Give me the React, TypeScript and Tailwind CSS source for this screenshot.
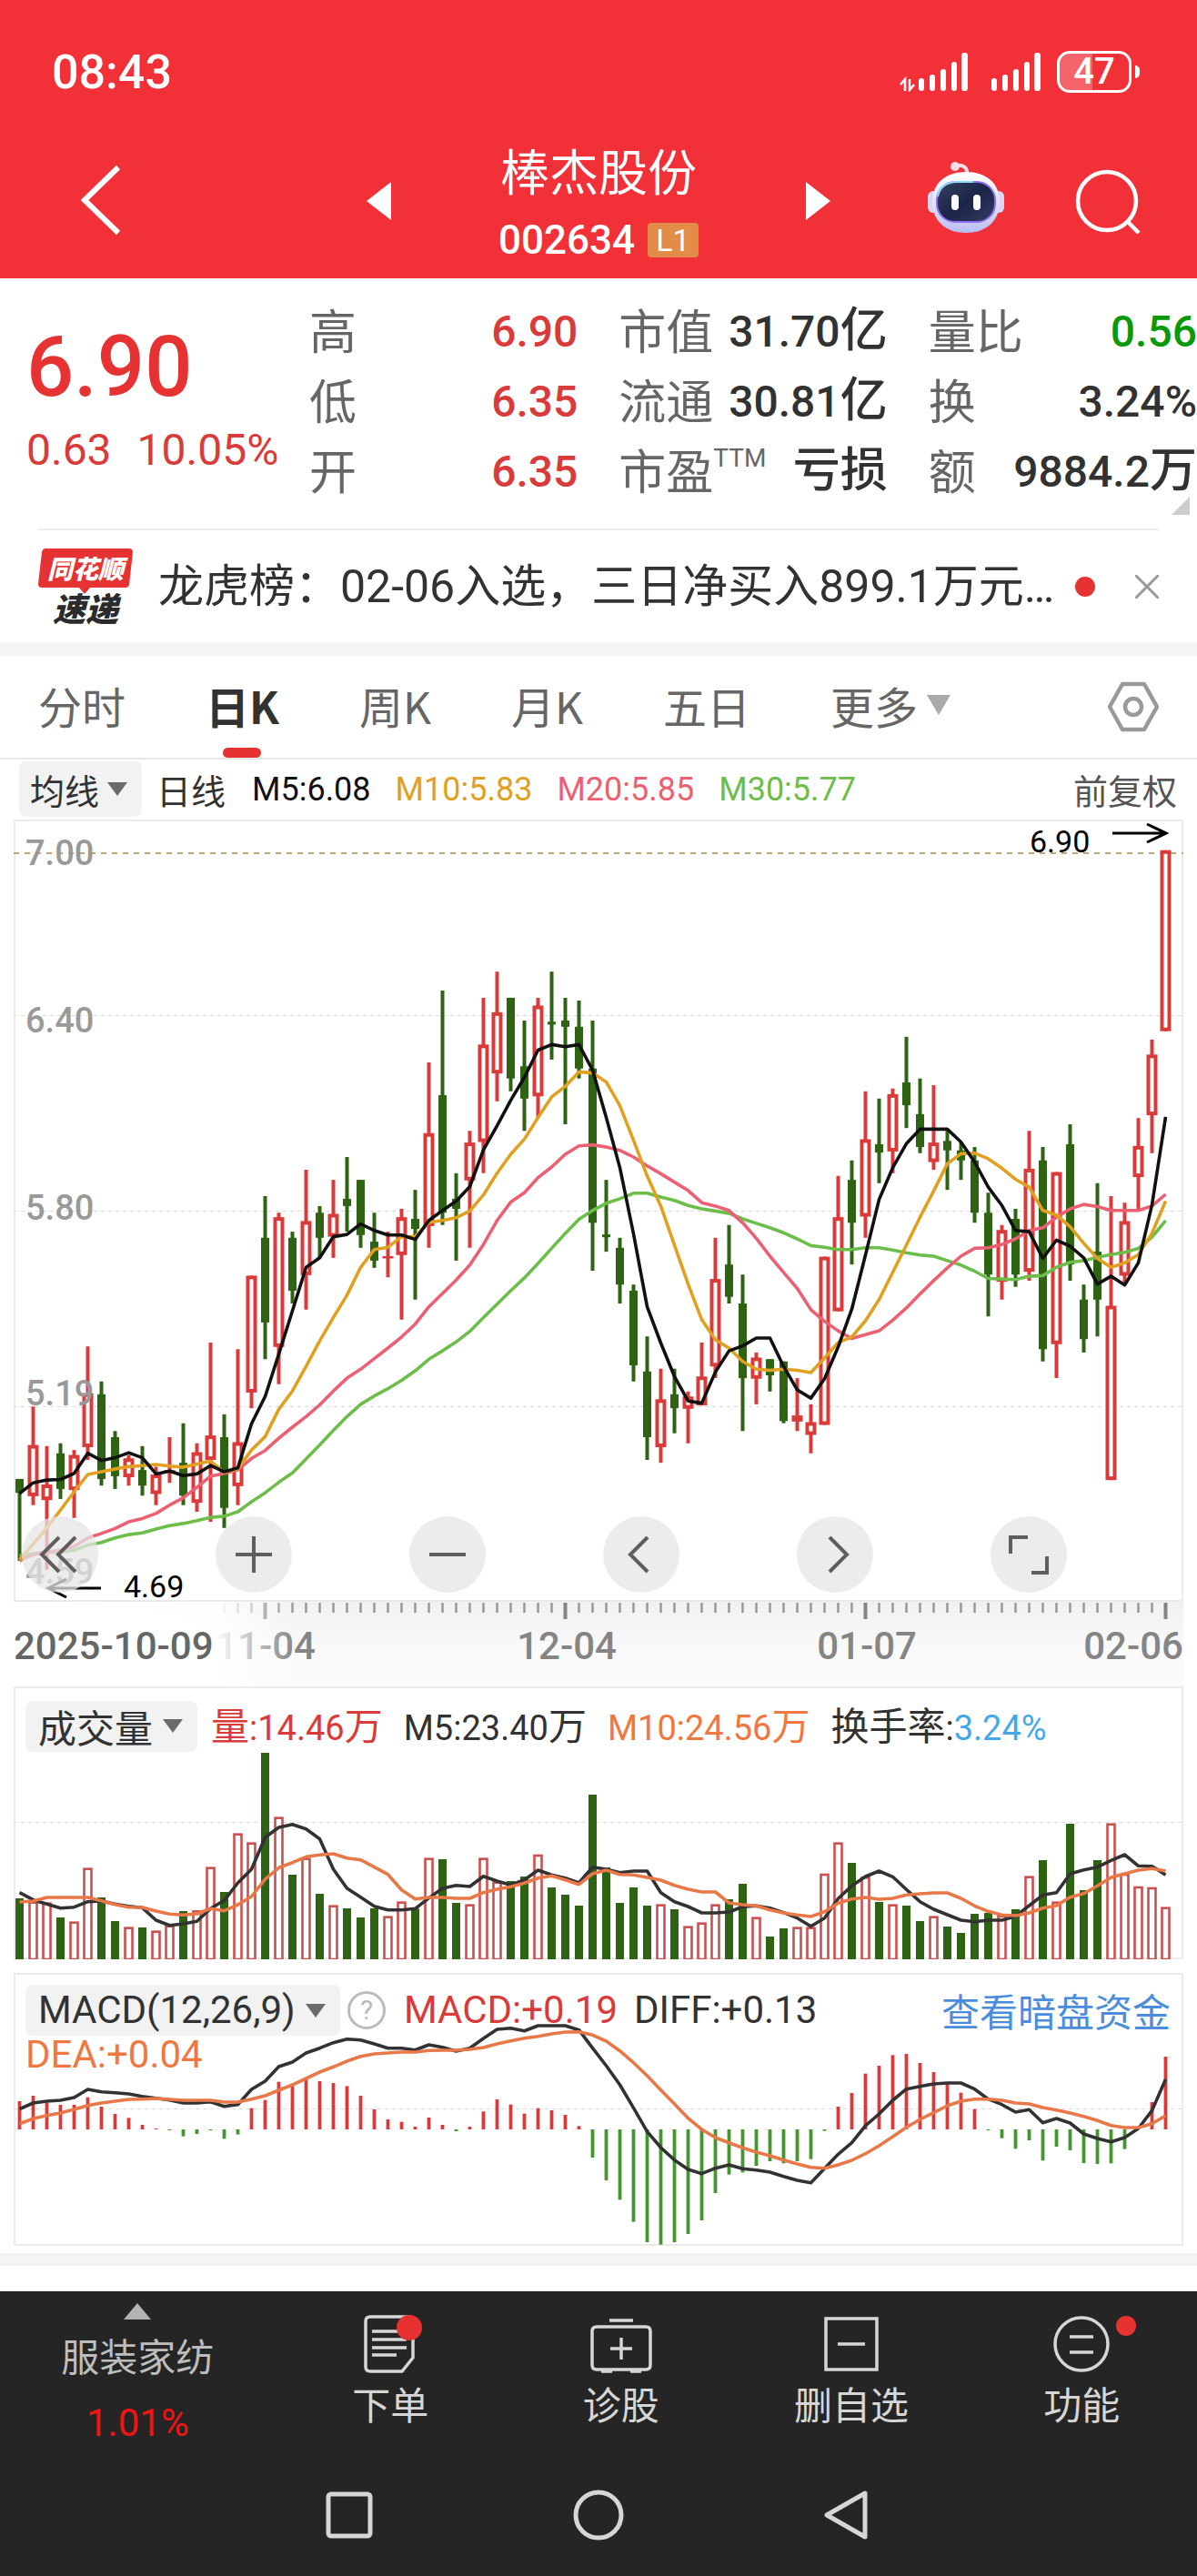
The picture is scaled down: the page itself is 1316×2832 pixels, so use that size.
import React, { useState } from 'react';

const NUMERALS = "Roboto, 'Noto Sans CJK SC', sans-serif";

const RED = '#d93a3a';
const GREEN = '#2f6314';

// One entry per trading day: high, body top, body bottom, low, 1 = rising.
// Levels are counted downwards from the top of the price panel.
const candles = [
  [1202, 1202, 1227, 1349, 0], [1072, 1141, 1233, 1249, 1], [1143, 1212, 1240, 1365, 1], [1138, 1156, 1220, 1238, 0],
  [1150, 1159, 1222, 1272, 1], [964, 1048, 1145, 1168, 1], [1027, 1050, 1202, 1214, 0], [1116, 1127, 1197, 1220, 0],
  [1159, 1165, 1199, 1214, 1], [1143, 1186, 1214, 1232, 0], [1180, 1194, 1229, 1249, 1], [1127, 1186, 1190, 1209, 1],
  [1102, 1173, 1232, 1249, 0], [1138, 1154, 1245, 1261, 1], [957, 1124, 1168, 1279, 1], [1086, 1127, 1254, 1290, 0],
  [969, 1136, 1215, 1249, 1], [837, 837, 1047, 1075, 1], [694, 769, 921, 987, 0], [724, 732, 965, 1032, 1],
  [758, 769, 864, 887, 0], [647, 739, 836, 898, 1], [712, 724, 769, 805, 0], [665, 726, 767, 805, 1],
  [624, 699, 712, 758, 0], [665, 665, 764, 787, 0], [724, 776, 810, 823, 0], [758, 802, 806, 840, 1],
  [717, 732, 800, 916, 1], [683, 735, 753, 880, 0], [454, 581, 748, 787, 1], [325, 513, 724, 746, 0],
  [653, 699, 717, 810, 0], [577, 598, 666, 787, 1], [338, 422, 597, 653, 1], [291, 364, 474, 524, 1],
  [338, 338, 483, 506, 0], [379, 461, 519, 577, 0], [338, 352, 515, 553, 1], [291, 381, 386, 449, 0],
  [338, 379, 390, 565, 0], [343, 390, 465, 483, 0], [379, 465, 742, 828, 0], [665, 763, 768, 794, 0],
  [769, 787, 853, 887, 0], [853, 864, 998, 1027, 0], [946, 1009, 1127, 1168, 0], [1004, 1059, 1145, 1173, 1],
  [1004, 1050, 1075, 1120, 0], [1045, 1054, 1076, 1138, 1], [957, 1018, 1070, 1070, 1], [769, 843, 1000, 1021, 1],
  [746, 817, 875, 887, 0], [835, 887, 1021, 1116, 0], [975, 984, 1022, 1068, 1], [987, 987, 1016, 1045, 0],
  [991, 991, 1098, 1102, 0], [1021, 1088, 1099, 1116, 1], [1068, 1100, 1123, 1156, 1], [803, 803, 1105, 1105, 1],
  [658, 732, 901, 901, 1], [630, 665, 742, 817, 0], [506, 592, 731, 769, 1], [519, 601, 616, 671, 0],
  [501, 511, 614, 653, 1], [408, 490, 531, 572, 0], [483, 547, 606, 617, 0], [495, 598, 633, 647, 1],
  [577, 595, 612, 683, 0], [598, 612, 630, 665, 0], [606, 630, 724, 742, 0], [688, 724, 835, 910, 0],
  [746, 755, 848, 880, 1], [717, 735, 835, 857, 0], [577, 645, 830, 846, 1], [606, 630, 969, 991, 0],
  [651, 651, 960, 1021, 1], [565, 601, 817, 846, 0], [853, 880, 951, 975, 0], [671, 794, 880, 946, 0],
  [694, 891, 1204, 1204, 1], [706, 739, 837, 851, 1], [554, 604, 660, 718, 1], [413, 440, 549, 617, 1],
  [73, 73, 398, 398, 1],
];

const ma5 = [
  1228, 1209, 1204, 1203, 1192, 1156, 1169, 1164, 1155, 1164, 1193, 1188, 1196, 1193, 1178, 1189, 1182, 1103, 1054, 978,
  900, 822, 805, 767, 763, 744, 756, 764, 764, 772, 738, 720, 703, 677, 611, 568, 522, 481, 432, 422, 426, 422, 468, 553,
  643, 762, 893, 958, 1018, 1062, 1066, 1010, 972, 963, 949, 949, 1000, 1042, 1057, 1022, 965, 897, 800, 700, 643, 600,
  574, 574, 574, 597, 633, 678, 711, 756, 758, 806, 773, 784, 805, 852, 838, 854, 814, 710, 552,
];
const ma10 = [
  1347, 1319, 1290, 1258, 1225, 1194, 1189, 1184, 1180, 1178, 1176, 1179, 1181, 1175, 1170, 1190, 1184, 1150, 1126, 1077,
  1044, 1000, 954, 912, 872, 822, 790, 786, 767, 767, 741, 738, 733, 721, 692, 653, 619, 592, 553, 516, 497, 471, 473,
  489, 532, 594, 658, 712, 782, 852, 916, 952, 967, 991, 1005, 1007, 1005, 1007, 1011, 985, 957, 947, 918, 880, 831, 782,
  732, 685, 636, 618, 617, 627, 644, 664, 678, 720, 728, 749, 779, 806, 822, 814, 799, 761, 703,
];
const ma20 = [
  1349, 1338, 1333, 1330, 1323, 1308, 1300, 1291, 1279, 1273, 1264, 1249, 1236, 1217, 1197, 1192, 1186, 1165, 1151, 1129,
  1109, 1090, 1069, 1044, 1021, 1005, 986, 967, 947, 924, 893, 869, 845, 818, 781, 738, 705, 688, 661, 642, 619, 604, 602,
  606, 612, 624, 640, 654, 669, 684, 706, 712, 720, 742, 770, 802, 831, 860, 898, 919, 936, 950, 943, 936, 917, 895, 870,
  846, 823, 802, 788, 787, 781, 771, 756, 751, 732, 717, 709, 713, 720, 720, 720, 712, 691,
];
const ma30 = [
  1340, 1336, 1334, 1333, 1330, 1321, 1316, 1308, 1302, 1299, 1292, 1286, 1282, 1277, 1271, 1269, 1261, 1243, 1227, 1208,
  1191, 1166, 1141, 1115, 1090, 1068, 1053, 1040, 1025, 1008, 987, 972, 956, 937, 912, 888, 864, 841, 815, 788, 761, 736,
  720, 707, 699, 689, 689, 696, 702, 711, 717, 721, 725, 735, 743, 751, 760, 771, 783, 786, 790, 790, 787, 787, 791, 796,
  800, 802, 810, 818, 829, 842, 843, 844, 838, 837, 822, 813, 810, 804, 799, 795, 788, 768, 738,
];

const volumes = [
  741, 752, 755, 804, 818, 641, 738, 816, 836, 837, 848, 830, 783, 781, 638, 720, 527, 557, 261, 473, 663, 608, 726, 764,
  774, 804, 774, 800, 752, 775, 608, 612, 756, 761, 608, 686, 684, 669, 597, 705, 729, 765, 399, 639, 756, 705, 765, 761,
  777, 833, 821, 761, 744, 693, 803, 867, 840, 836, 836, 660, 557, 624, 670, 753, 761, 765, 816, 800, 834, 855, 792, 789,
  797, 777, 668, 615, 752, 495, 714, 615, 494, 660, 702, 705, 770,
];
const vol5 = [
  722, 746, 760, 773, 770, 752, 750, 760, 767, 772, 813, 830, 825, 817, 775, 748, 690, 645, 540, 507, 497, 512, 545, 645,
  708, 737, 767, 779, 779, 775, 740, 708, 698, 702, 668, 684, 697, 680, 648, 664, 674, 690, 638, 645, 656, 651, 651, 722,
  752, 768, 789, 789, 786, 769, 766, 773, 788, 806, 833, 806, 742, 700, 669, 651, 670, 712, 752, 777, 795, 813, 818, 813,
  813, 800, 765, 730, 722, 660, 647, 638, 616, 597, 634, 635, 664,
];
const vol10 = [
  753, 750, 738, 738, 738, 738, 749, 761, 770, 771, 783, 793, 796, 792, 775, 782, 762, 735, 678, 640, 623, 604, 598, 594,
  608, 614, 638, 662, 713, 743, 738, 738, 741, 741, 722, 711, 703, 691, 674, 667, 680, 695, 660, 648, 662, 664, 672, 681,
  698, 711, 720, 720, 756, 762, 766, 779, 789, 796, 801, 785, 757, 743, 738, 744, 741, 730, 726, 723, 723, 741, 766, 784,
  796, 798, 789, 773, 765, 737, 725, 700, 672, 660, 648, 643, 651,
];

const macd = [
  450, 432, 455, 462, 462, 437, 468, 492, 505, 528, 540, 546, 566, 558, 546, 574, 560, 473, 446, 386, 400, 378, 384, 390,
  400, 432, 477, 510, 518, 534, 504, 528, 549, 534, 484, 444, 461, 491, 473, 480, 495, 532, 636, 711, 775, 848, 915, 923,
  915, 888, 843, 753, 692, 685, 663, 648, 655, 648, 641, 548, 468, 423, 359, 333, 298, 294, 324, 354, 390, 422, 476, 546,
  572, 607, 579, 646, 600, 612, 654, 657, 655, 608, 543, 453, 303,
];
const diff = [
  476, 456, 450, 447, 438, 411, 419, 422, 426, 434, 440, 446, 456, 456, 452, 467, 461, 411, 384, 336, 321, 291, 275, 257,
  245, 248, 261, 275, 275, 281, 264, 272, 285, 275, 243, 213, 209, 218, 201, 201, 201, 215, 275, 333, 396, 472, 550, 603,
  644, 675, 689, 671, 660, 673, 677, 684, 698, 711, 719, 672, 625, 587, 531, 492, 447, 410, 401, 393, 390, 390, 410, 443,
  461, 486, 478, 521, 507, 522, 558, 573, 584, 570, 540, 481, 378,
];
const dea = [
  524, 508, 497, 489, 477, 464, 456, 450, 444, 443, 441, 444, 447, 447, 447, 453, 453, 443, 432, 414, 396, 375, 354, 337,
  318, 302, 294, 291, 288, 288, 283, 282, 282, 279, 273, 261, 251, 242, 236, 228, 222, 221, 232, 252, 284, 323, 366, 413,
  459, 506, 543, 570, 587, 604, 618, 630, 644, 657, 668, 671, 660, 645, 623, 597, 567, 536, 510, 488, 465, 450, 443, 443,
  447, 456, 459, 471, 479, 489, 500, 514, 530, 537, 537, 524, 498,
];

const dayX = (i: number) => 6.5 + i * 15;
const priceY = (v: number) => (v - 18) / 1.6333;
const volY = (v: number) => (v - 42) / 3;
const macdY = (v: number) => (v - 27) / 3;

const points = (values: number[], toY: (v: number) => number) =>
  values.map((v, i) => `${dayX(i)},${toY(v).toFixed(1)}`).join(' ');

type CurveProps = { values: number[]; toY: (v: number) => number; color: string };

const Curve = ({ values, toY, color }: CurveProps) => (
  <polyline points={points(values, toY)} fill="none" stroke={color} strokeWidth="3.6" strokeLinejoin="round" />
);

const Down = ({ className = 'h-[15px] w-[22px]' }) => (
  <svg viewBox="0 0 22 15" preserveAspectRatio="none" className={`pointer-events-none ${className}`} aria-hidden="true">
    <path d="M0 0h22L11 15z" fill="currentColor" />
  </svg>
);

type PickerProps = { label: string; options: string[]; className: string };

const Picker = ({ label, options, className }: PickerProps) => (
  <div className="relative flex items-center text-[#6b6b6b]">
    <select
      aria-label={label}
      className={`appearance-none rounded-lg bg-[#f2f2f2] text-[#323232] ${className}`}
    >
      {options.map((option) => <option key={option}>{option}</option>)}
    </select>
    <Down className="absolute right-4 h-[15px] w-[22px]" />
  </div>
);

const Signal = ({ data = false }) => (
  <svg viewBox="0 0 76 44" className="h-11 w-[76px]" fill="#fff" aria-hidden="true">
    {data && (
      <g fill="none" stroke="#fff" strokeWidth="2.5">
        <path d="M7 43V30l-5 6M12 30v12l5-6" />
      </g>
    )}
    <rect x="22" y="29" width="6" height="14" rx="3" />
    <rect x="34" y="25" width="6" height="18" rx="3" />
    <rect x="46" y="19" width="6" height="24" rx="3" />
    <rect x="58" y="11" width="6" height="32" rx="3" />
    <rect x="69" y="1" width="7" height="42" rx="3" />
  </svg>
);

const StatusBar = () => (
  <div className="flex h-[150px] items-center justify-between pt-2 pr-[63px] pl-[57px]">
    <span className="pt-0.5 font-[family-name:Roboto] text-[52px] font-medium">08:43</span>
    <div className="flex items-center gap-1">
      <Signal data />
      <Signal />
      <div className="ml-3.5 flex h-[46px] w-[82px] items-center justify-center rounded-[14px] border-[3px] border-white bg-linear-to-r from-white/25 from-47% to-transparent to-47% font-[family-name:Roboto] text-[40px] font-medium">
        47
      </div>
      <span className="h-3.5 w-[5px] rounded-r-full bg-white" />
    </div>
  </div>
);

const Robot = () => (
  <svg viewBox="0 0 84 78" className="h-[78px] w-[84px]" aria-hidden="true">
    <defs>
      <linearGradient id="shell" x1="0" y1="0" x2="0" y2="1">
        <stop offset="0" stopColor="#fff" />
        <stop offset="0.6" stopColor="#dcdcfa" />
        <stop offset="1" stopColor="#b9bdf0" />
      </linearGradient>
      <linearGradient id="visor" x1="0" y1="0" x2="1" y2="1">
        <stop offset="0" stopColor="#37415f" />
        <stop offset="0.5" stopColor="#1b2547" />
        <stop offset="1" stopColor="#343b63" />
      </linearGradient>
    </defs>
    <path d="M43 14C44 6 39 3 31 4" fill="none" stroke="#f7dbe8" strokeWidth="4" strokeLinecap="round" />
    <circle cx="30" cy="5" r="5" fill="#f7dbe8" />
    <rect x="0" y="32" width="12" height="24" rx="6" fill="#d9d6f3" />
    <rect x="72" y="32" width="12" height="24" rx="6" fill="#d9d6f3" />
    <path d="M42 11c22 0 37 12 37 33S64 78 42 78 5 65 5 44s15-33 37-33z" fill="url(#shell)" />
    <rect x="10" y="22" width="64" height="44" rx="20" fill="url(#visor)" stroke="#8a6df0" strokeWidth="2" />
    <path d="M11 38c2-10 9-15 19-16h20" fill="none" stroke="#8fdcf5" strokeWidth="2" />
    <rect x="26" y="36" width="8" height="17" rx="4" fill="#fff" />
    <rect x="50" y="36" width="8" height="17" rx="4" fill="#fff" />
  </svg>
);

const TitleBar = () => (
  <div className="flex h-[156px] items-center pr-[62px] pb-3.5 pl-[86px]">
    <button type="button" aria-label="返回">
      <svg viewBox="0 0 48 80" className="h-20 w-12" fill="none" stroke="#fff" strokeWidth="6">
        <path d="M44 3L7 39l37 36" />
      </svg>
    </button>
    <div className="flex flex-1 items-center justify-between pr-[107px] pl-[269px]">
      <button type="button" aria-label="上一只">
        <svg viewBox="0 0 27 42" className="h-[42px] w-[27px]" fill="#fff"><path d="M27 0v42L0 21z" /></svg>
      </button>
      <div className="flex flex-col items-center pt-2">
        <h1 className="text-[54px] leading-[78px]">棒杰股份</h1>
        <div className="flex h-[76px] items-center gap-3.5">
          <span className="font-[family-name:Roboto] text-[44px] font-medium">002634</span>
          <span className="flex h-[38px] w-14 items-center justify-center rounded-sm bg-[#e38c48] font-[family-name:Roboto] text-[34px]">L1</span>
        </div>
      </div>
      <button type="button" aria-label="下一只">
        <svg viewBox="0 0 27 42" className="h-[42px] w-[27px]" fill="#fff"><path d="M0 0v42l27-21z" /></svg>
      </button>
    </div>
    <div className="flex items-center gap-[78px]">
      <button type="button" aria-label="智能助手" className="pb-2"><Robot /></button>
      <button type="button" aria-label="搜索">
        <svg viewBox="0 0 72 72" className="h-[72px] w-[72px]" fill="none" stroke="#fff" strokeWidth="4.5">
          <circle cx="35" cy="36" r="32" />
          <path d="M57 58l13 13" />
        </svg>
      </button>
    </div>
  </div>
);

const quotes = [
  { label: '高', value: '6.90', color: 'text-[#d93a3a]' },
  { label: '市值', value: '31.70', unit: '亿', color: 'text-[#323232]' },
  { label: '量比', value: '0.56', color: 'text-[#0a990a]' },
  { label: '低', value: '6.35', color: 'text-[#d93a3a]' },
  { label: '流通', value: '30.81', unit: '亿', color: 'text-[#323232]' },
  { label: '换', value: '3.24%', color: 'text-[#323232]' },
  { label: '开', value: '6.35', color: 'text-[#d93a3a]' },
  { label: '市盈', sup: 'TTM', unit: '亏损', color: 'text-[#323232]' },
  { label: '额', value: '9884.2', unit: '万', color: 'text-[#323232]' },
];

const Quote = () => (
  <section className="relative flex h-[275px] pt-[17px]">
    <div className="w-[340px] pl-[29px] font-[family-name:Roboto]">
      <div className="pt-5 text-[92px] leading-[122px] font-medium text-[#e63232]">6.90</div>
      <div className="flex gap-7 text-[48px] leading-[60px] text-[#d93a3a]">
        <span>0.63</span>
        <span>10.05%</span>
      </div>
    </div>
    <dl className="grid flex-1 auto-rows-[77px] grid-cols-3 gap-x-[45px]">
      {quotes.map((q) => (
        <div key={q.label} className="flex items-center justify-between text-[52px] leading-[77px] whitespace-nowrap">
          <dt className="flex text-[#666]">
            {q.label}
            {q.sup && <sup className="top-0 font-[family-name:Roboto] text-[28px] leading-[54px]">{q.sup}</sup>}
          </dt>
          <dd className={`font-medium ${q.color}`}>
            <span className="font-[family-name:Roboto] text-[48px]">{q.value}</span>
            {q.unit}
          </dd>
        </div>
      ))}
    </dl>
    <svg viewBox="0 0 20 20" className="absolute right-2 bottom-[15px] h-5 w-5" aria-hidden="true">
      <path d="M20 0v20H0z" fill="#ccc" />
    </svg>
  </section>
);

const News = () => (
  <section className="mx-[42px] flex h-[126px] items-center border-t-2 border-[#eee]">
    <div className="relative flex w-[104px] flex-col items-center">
      <svg viewBox="0 0 104 50" className="absolute top-0 left-0 h-[50px] w-[104px]" aria-hidden="true">
        <path d="M8 0h92q4 0 4 4l-4 36q-1 3-4 3H57l-6 7-6-7H4q-4 0-4-4L4 4q1-4 4-4z" fill="#e63232" />
      </svg>
      <b className="relative text-[28px] leading-[43px] font-black text-white italic">同花顺</b>
      <b className="relative text-[36px] leading-[42px] font-black text-[#2b2b2b] italic">速递</b>
    </div>
    <a href="#news" className="ml-7 min-w-0 flex-1 truncate font-[family-name:Roboto,Noto_Sans_CJK_SC,sans-serif] text-[50px] text-[#323232]">
      龙虎榜：02-06入选，三日净买入899.1万元…
    </a>
    <span className="ml-4 h-[22px] w-[22px] rounded-full bg-[#e63232]" />
    <button type="button" aria-label="关闭" className="ml-11">
      <svg viewBox="0 0 26 26" className="h-[26px] w-[26px]" stroke="#999" strokeWidth="3"><path d="M0 0l26 26M26 0L0 26" /></svg>
    </button>
  </section>
);

const tabs = ['分时', '日K', '周K', '月K', '五日'];

const Tabs = () => {
  const [active, setActive] = useState('日K');

  return (
    <nav className="flex h-[114px] items-stretch border-b-2 border-[#e8e8e8] pr-[42px] pl-[42px] text-[48px] text-[#666]">
      {tabs.map((tab) => (
        <button
          key={tab}
          type="button"
          onClick={() => setActive(tab)}
          className={`relative mr-[88px] pb-1 ${tab === active ? 'font-bold text-[#323232]' : ''}`}
        >
          {tab}
          {tab === active && <span className="absolute bottom-0 left-1/2 h-[11px] w-[42px] -translate-x-1/2 rounded-md bg-[#e63232]" />}
        </button>
      ))}
      <button type="button" aria-haspopup="menu" className="flex items-center gap-2.5 pb-1 text-[#666]">
        更多
        <Down className="h-[22px] w-[26px] text-[#aaa]" />
      </button>
      <button type="button" aria-label="设置" className="ml-auto">
        <svg viewBox="0 0 56 56" className="h-14 w-14" fill="none" stroke="#999" strokeWidth="4.5" strokeLinejoin="round">
          <path d="M16 3h24l14 25-14 25H16L2 28z" />
          <circle cx="28" cy="28" r="9" />
        </svg>
      </button>
    </nav>
  );
};

const Averages = () => (
  <div className="flex h-[66px] items-center pr-[22px] pb-0.5 pl-[21px] text-[38px] whitespace-nowrap">
    <Picker label="指标" options={['均线', 'BOLL']} className="h-[61px] w-[135px] pl-3" />
    <span className="ml-4 text-[#323232]">日线</span>
    <div className="ml-[29px] flex gap-[27px] pt-0.5 font-[family-name:Roboto] text-[36px]">
      <span className="text-[#111]">M5:6.08</span>
      <span className="text-[#e0a020]">M10:5.83</span>
      <span className="text-[#ec6073]">M20:5.85</span>
      <span className="text-[#6cbd49]">M30:5.77</span>
    </div>
    <span className="ml-auto text-[#555]">前复权</span>
  </div>
);

const Candle = ({ day, index }: { day: number[]; index: number }) => {
  const [high, top, bottom, low, up] = day;
  const x = dayX(index);
  const color = up ? RED : GREEN;
  const y = priceY(top);
  const height = priceY(bottom) - y;

  return (
    <g>
      <path d={`M${x} ${priceY(high)}V${priceY(low)}`} stroke={color} strokeWidth="4" />
      {up && height > 8 ? (
        <rect x={x - 4} y={y + 2} width="8" height={height - 4} fill="#fff" stroke={color} strokeWidth="4" />
      ) : (
        <rect x={x - (up ? 6 : 4.5)} y={y} width={up ? 12 : 9} height={height} fill={color} />
      )}
    </g>
  );
};

const priceLabels: [string, number][] = [['7.00', 50], ['6.40', 234], ['5.80', 440], ['5.19', 644], ['4.59', 840]];

const controls = [
  { name: '最左', d: 'M41 23L22 42l19 19M59 23L40 42l19 19' },
  { name: '放大', d: 'M22 42h40M42 22v40' },
  { name: '缩小', d: 'M22 42h40' },
  { name: '左移', d: 'M49 23L30 42l19 19' },
  { name: '右移', d: 'M36 23l19 19-19 19' },
  { name: '全屏', d: 'M22 41V23h19M45 62h17V44' },
];

const PriceChart = () => (
  <div className="relative">
    <svg viewBox="0 0 1286 860" className="block w-full overflow-visible" role="img" aria-label="日K线图">
      <rect x="1" y="1" width="1284" height="858" fill="none" stroke="#ebebeb" strokeWidth="2" />
      {[215, 430, 645].map((y) => (
        <path key={y} d={`M0 ${y}.5H1286`} stroke="#ddd" strokeWidth="1" strokeDasharray="4 4" />
      ))}
      <path d="M0 37H1286" stroke="#bfa878" strokeWidth="2" strokeDasharray="6 6" />
      {candles.map((day, i) => <Candle key={i} day={day} index={i} />)}
      <Curve values={ma30} toY={priceY} color="#6cbd49" />
      <Curve values={ma20} toY={priceY} color="#ec6073" />
      <Curve values={ma10} toY={priceY} color="#e0a020" />
      <Curve values={ma5} toY={priceY} color="#111" />
      <g fill="#999" fontSize="38" fontWeight="500" fontFamily={NUMERALS}>
        {priceLabels.map(([text, y]) => <text key={text} x="13" y={y}>{text}</text>)}
      </g>
      <g fontSize="34" fontFamily={NUMERALS} fill="#000">
        <text x="1117" y="36">6.90</text>
        <text x="121" y="855">4.69</text>
      </g>
      <path d="M1208 15h59M1246 5l21 10-21 10M96 845H38M58 835l-20 10 20 10" fill="none" stroke="#000" strokeWidth="3" />
    </svg>
    <div className="absolute bottom-2.5 left-[9px] flex gap-[129px]">
      {controls.map((c) => (
        <button key={c.name} type="button" aria-label={c.name} className="h-[84px] w-[84px] rounded-full bg-[#e6e6e6]/75">
          <svg viewBox="0 0 84 84" fill="none" stroke="#5e5e5e" strokeWidth="4"><path d={c.d} /></svg>
        </button>
      ))}
    </div>
  </div>
);

const Timeline = () => (
  <div className="bg-linear-to-b from-[#f1f1f1] to-[#fafafa] to-60%">
    <svg viewBox="0 0 1286 93" className="block w-full" fontFamily={NUMERALS} fontSize="42" fill="#858585">
      <defs>
        <linearGradient id="fade" x1="0" x2="1">
          <stop offset="0" stopColor="#fff" />
          <stop offset="0.72" stopColor="#fff" stopOpacity="0.95" />
          <stop offset="1" stopColor="#fff" stopOpacity="0" />
        </linearGradient>
      </defs>
      {candles.map((_, i) => {
        if (i < 15) return null;
        const major = (i - 18) % 22 === 0;
        return (
          <path key={i} d={`M${dayX(i)} 1v${major ? 18 : 11}`} stroke={major ? '#858585' : '#999'} strokeWidth={major ? 4 : 2.5} />
        );
      })}
      <g textAnchor="end" fontWeight="500">
        <text x="332" y="63">11-04</text>
        <text x="663" y="63">12-04</text>
        <text x="993" y="63">01-07</text>
        <text x="1286" y="63">02-06</text>
      </g>
      <rect width="310" height="93" fill="url(#fade)" />
      <text x="0" y="63" fill="#666" fontWeight="500">2025-10-09</text>
    </svg>
  </div>
);

type ReadingProps = { name?: string; value: string; unit?: string; className?: string };

const Reading = ({ name, value, unit, className = '' }: ReadingProps) => (
  <span className={className}>
    {name}
    <span className="font-[family-name:Roboto] text-[38px]">{value}</span>
    {unit}
  </span>
);

const VolumeChart = () => (
  <div className="relative">
    <svg viewBox="0 0 1286 300" className="block w-full" role="img" aria-label="成交量">
      <rect x="1" y="1" width="1284" height="298" fill="#fff" stroke="#ebebeb" strokeWidth="2" />
      <path d="M0 149.5H1286" stroke="#ddd" strokeWidth="1" strokeDasharray="4 4" />
      {volumes.map((v, i) =>
        candles[i][4] ? (
          <rect key={i} x={dayX(i) - 4} y={volY(v) + 1} width="8" height={299 - volY(v)} fill="#fff" stroke="#cb5050" strokeWidth="2.6" />
        ) : (
          <rect key={i} x={dayX(i) - 4.5} y={volY(v)} width="9" height={300 - volY(v)} fill={GREEN} />
        )
      )}
      <Curve values={vol5} toY={volY} color="#323232" />
      <Curve values={vol10} toY={volY} color="#e87848" />
    </svg>
    <div className="absolute top-[13px] left-[13px] flex items-center gap-[23px] text-[42px] leading-[56px] whitespace-nowrap text-[#323232]">
      <Picker label="副图" options={['成交量', '成交额']} className="h-14 w-[189px] pl-3.5" />
      <Reading name="量" value=":14.46" unit="万" className="-ml-2 text-[#d93a3a]" />
      <Reading value="M5:23.40" unit="万" />
      <Reading value="M10:24.56" unit="万" className="text-[#f07840]" />
      <span className="flex">
        <Reading name="换手率" value=":" />
        <Reading value="3.24%" className="text-[#44a8e6]" />
      </span>
    </div>
  </div>
);

const MacdChart = () => (
  <div className="relative mt-[15px]">
    <svg viewBox="0 0 1286 300" className="block w-full" role="img" aria-label="MACD">
      <rect x="1" y="1" width="1284" height="298" fill="none" stroke="#ebebeb" strokeWidth="2" />
      <path d="M0 149.5H1286" stroke="#ddd" strokeWidth="1" strokeDasharray="4 4" />
      {macd.map((v, i) => (
        <path key={i} d={`M${dayX(i)} 172V${macdY(v)}`} stroke={v < 543 ? RED : '#46962f'} strokeWidth="3.8" />
      ))}
    </svg>
    <div className="absolute top-[13px] right-3.5 left-[13px] font-[family-name:Roboto] text-[42px] leading-[56px] whitespace-nowrap text-[#323232]">
      <div className="flex items-center">
        <Picker label="指标参数" options={['MACD(12,26,9)', 'KDJ(9,3,3)']} className="h-14 w-[346px] pl-3.5" />
        <button type="button" aria-label="说明" className="ml-2 flex h-[42px] w-[42px] items-center justify-center rounded-full border-[3px] border-[#bbb] text-[30px] text-[#bbb]">?</button>
        <span className="ml-5 text-[#d93a3a]">MACD:+0.19</span>
        <span className="ml-[18px]">DIFF:+0.13</span>
        <a href="#funds" className="ml-auto font-[family-name:Noto_Sans_CJK_SC,sans-serif] text-[#4a8edb]">查看暗盘资金</a>
      </div>
      <div className="leading-[42px] text-[#f07840]">DEA:+0.04</div>
    </div>
    <svg viewBox="0 0 1286 300" className="pointer-events-none absolute inset-0 w-full" aria-hidden="true">
      <Curve values={diff} toY={macdY} color="#323232" />
      <Curve values={dea} toY={macdY} color="#e87848" />
    </svg>
  </div>
);

const actions = [
  {
    label: '下单',
    icon: (
      <>
        <path d="M10 2h42q5 0 5 5v40L45 62H10q-5 0-5-5V7q0-5 5-5zM12 18h38M12 27h38M12 36h38M12 44h27" />
        <circle cx="53" cy="14" r="14" fill="#e83232" stroke="none" />
      </>
    ),
  },
  {
    label: '诊股',
    icon: <path d="M5 13h54q5 0 5 5v37q0 5-5 5H5q-5 0-5-5V18q0-5 5-5zM19 6h26M32 25v24M20 37h24M10 62h12M42 62h12" />,
  },
  { label: '删自选', icon: <path d="M4 4h56v56H4zM17 32h30" /> },
  { label: '功能', icon: <path d="M32 3a29 29 0 1 1 0 58 29 29 0 1 1 0-58M19 24h26M19 41h26" />, badge: true },
];

const BottomBar = () => (
  <footer className="bg-[#252525] text-[42px] text-[#d6d6d6]">
    <div className="flex h-[186px]">
      <button type="button" className="flex w-[23%] flex-col items-center pt-[13px] text-[#bdbdbd]">
        <svg viewBox="0 0 30 18" className="h-[18px] w-[30px]" fill="#b3b3b3" aria-hidden="true"><path d="M15 0l15 18H0z" /></svg>
        <span className="pt-2 leading-[62px]">服装家纺</span>
        <span className="pt-2 font-[family-name:Roboto] leading-[72px] text-[#f01414]">1.01%</span>
      </button>
      {actions.map((action) => (
        <button key={action.label} type="button" className="relative flex flex-1 flex-col items-center pt-[26px]">
          <svg viewBox="0 0 64 64" className="h-16 w-16 overflow-visible" fill="none" stroke="#d6d6d6" strokeWidth="3.5" aria-hidden="true">
            {action.icon}
            {action.badge && <circle cx="81" cy="12" r="11" fill="#e83232" stroke="none" />}
          </svg>
          <span className="leading-[66px]">{action.label}</span>
        </button>
      ))}
    </div>
    <div className="flex h-[127px] items-center justify-center gap-[218px] pb-2">
      <button type="button" aria-label="最近任务">
        <svg viewBox="0 0 56 56" className="h-14 w-14" fill="none" stroke="#d6d6d6" strokeWidth="5"><rect x="5" y="5" width="46" height="46" rx="3" /></svg>
      </button>
      <button type="button" aria-label="主屏幕">
        <svg viewBox="0 0 56 56" className="h-14 w-14" fill="none" stroke="#d6d6d6" strokeWidth="5"><circle cx="28" cy="28" r="25" /></svg>
      </button>
      <button type="button" aria-label="返回上级">
        <svg viewBox="0 0 56 56" className="h-14 w-14" fill="none" stroke="#d6d6d6" strokeWidth="5" strokeLinejoin="round"><path d="M47 4v48L5 28z" /></svg>
      </button>
    </div>
  </footer>
);

const App = () => (
  <div className="min-w-[1200px] bg-white font-[family-name:Noto_Sans_CJK_SC,sans-serif]">
    <header className="bg-[#f13038] text-white">
      <StatusBar />
      <TitleBar />
    </header>
    <Quote />
    <News />
    <div className="h-3.5 bg-[#f4f4f4]" />
    <Tabs />
    <Averages />
    <main className="mr-[15px] ml-[15px]">
      <PriceChart />
      <Timeline />
      <VolumeChart />
      <MacdChart />
    </main>
    <div className="mt-2 mb-7 h-3.5 bg-[#f4f4f4]" />
    <BottomBar />
  </div>
);

export default App;
